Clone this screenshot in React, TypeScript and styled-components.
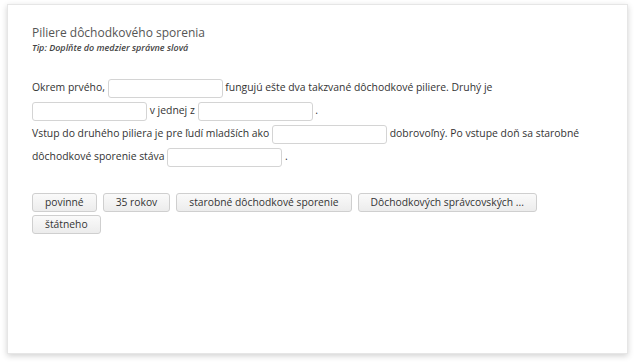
import styled, { createGlobalStyle } from 'styled-components'

const GlobalStyle = createGlobalStyle`
  html, body {
    margin: 0;
    padding: 0;
    background: #fff;
  }
  body {
    font-family: 'Open Sans', 'Liberation Sans', sans-serif;
    color: #333;
  }
`

const Page = styled.div`
  padding: 4px 8px 10px 7px;
`

const Card = styled.div`
  box-sizing: border-box;
  width: 621px;
  height: 350px;
  background: #fff;
  border: 1px solid #e6e6e6;
  box-shadow: 0 2px 6px rgba(0, 0, 0, 0.18);
  padding: 19px 24px;
`

const Title = styled.h2`
  margin: 0;
  font-size: 12px;
  font-weight: 400;
  color: #555;
  line-height: 18px;
`

const Tip = styled.div`
  font-size: 9px;
  font-style: italic;
  font-weight: 600;
  color: #444;
  line-height: 12px;
`

const Text = styled.div`
  margin-top: 22px;
  font-size: 10.4px;
  line-height: 23px;
  color: #333;
`

const Gap = styled.input.attrs({ type: 'text' })`
  box-sizing: border-box;
  width: 115px;
  height: 19px;
  margin: 0;
  padding: 0 4px;
  border: 1px solid #d4d4d4;
  border-radius: 3px;
  background: #fff;
  vertical-align: middle;
  font: inherit;
  line-height: normal;
`

const WordBank = styled.div`
  margin-top: 25px;
  display: flex;
  flex-wrap: wrap;
  gap: 3px 6px;
`

const Word = styled.button`
  box-sizing: border-box;
  height: 19px;
  padding: 0 12px;
  border: 1px solid #cfcfcf;
  border-radius: 3px;
  background: linear-gradient(#fafafa, #ececec);
  font-family: 'Open Sans', 'Liberation Sans', sans-serif;
  font-size: 10.3px;
  color: #333;
  line-height: 17px;
  cursor: pointer;
`

const words = ['povinné', '35 rokov', 'starobné dôchodkové sporenie', 'Dôchodkových správcovských ...', 'štátneho']

export default function App() {
  return (
    <Page>
      <GlobalStyle />
      <Card>
        <Title>Piliere dôchodkového sporenia</Title>
        <Tip>Tip: Doplňte do medzier správne slová</Tip>
        <Text>
          Okrem prvého, <Gap /> fungujú ešte dva takzvané dôchodkové piliere. Druhý je <Gap /> v jednej z{' '}
          <Gap /> .
          <br />
          Vstup do druhého piliera je pre ľudí mladších ako <Gap /> dobrovoľný. Po vstupe doň sa starobné
          dôchodkové sporenie stáva <Gap /> .
        </Text>
        <WordBank>
          {words.map((w) => (
            <Word key={w}>{w}</Word>
          ))}
        </WordBank>
      </Card>
    </Page>
  )
}
